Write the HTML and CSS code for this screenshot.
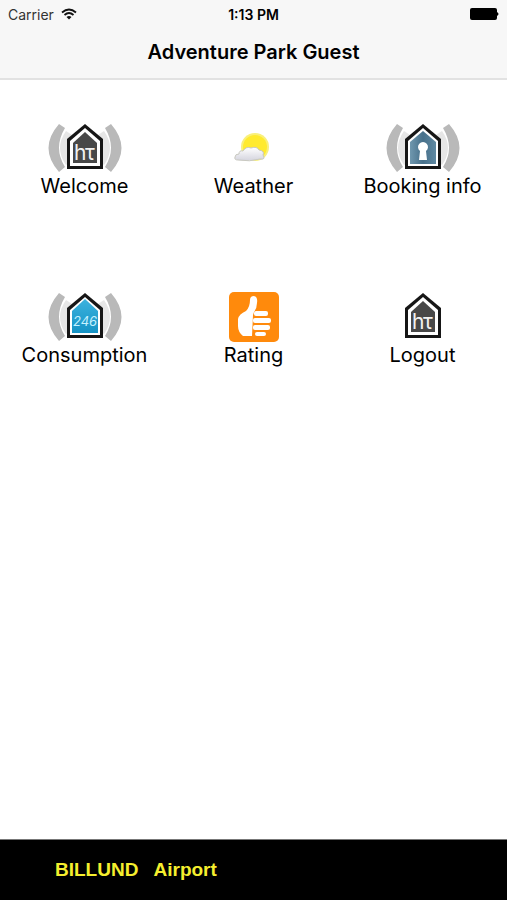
FILE: index.html
```html
<!DOCTYPE html>
<html lang="en">

<head>
    <meta charset="UTF-8" />
    <meta name="viewport" content="width=device-width, initial-scale=1.0" />
    <title>Adventure Park Guest</title>
    <link rel="stylesheet" href="styles.css">
</head>

<body>
    <!-- shared icon parts -->
    <svg class="defs" aria-hidden="true">
        <defs>
            <linearGradient id="water" x1="0" y1="0" x2="0" y2="1">
                <stop offset="0" stop-color="#3cb2de" />
                <stop offset="1" stop-color="#1593c5" />
            </linearGradient>
            <linearGradient id="steel" x1="0" y1="0" x2="1" y2="0">
                <stop offset="0" stop-color="#6f97ae" />
                <stop offset="0.5" stop-color="#47708a" />
                <stop offset="1" stop-color="#5f89a2" />
            </linearGradient>
            <linearGradient id="cloud" x1="0" y1="0" x2="0" y2="1">
                <stop offset="0" stop-color="#ffffff" />
                <stop offset="1" stop-color="#d4d4de" />
            </linearGradient>
            <symbol id="waves" viewBox="0 0 74 50">
                <path d="M18 8Q6 25 18 42L24 38V12zM56 8Q68 25 56 42L50 38V12z" fill="#e6e6e6" />
                <path d="M11 1L17 5Q5 25 17 44L11 49Q-10 25 11 1z" fill="#b9b9b9" />
                <path d="M63 1L57 5Q69 25 57 44L63 49Q84 25 63 1z" fill="#b9b9b9" />
            </symbol>
            <symbol id="house" viewBox="0 0 74 50">
                <path d="M37 1L55 16V46H19V16z" fill="#161616" />
                <path d="M37 5L52 18V43H22V18z" fill="#fff" />
            </symbol>
        </defs>
    </svg>

    <header>
        <div class="status">
            <span class="carrier">Carrier
                <svg width="16" height="12" viewBox="0 0 16 12" aria-hidden="true">
                    <path d="M1 4.500Q8 -1.500 15 4.500M3.500 7Q8 3 12.500 7" fill="none" stroke="#111" stroke-width="1.800" />
                    <path d="M5.500 9Q8 7 10.500 9L8 11.500z" fill="#111" />
                </svg>
            </span>
            <span class="time">1:13 PM</span>
            <span class="battery">
                <svg width="30" height="12" viewBox="0 0 30 12" aria-hidden="true">
                    <rect x="1" width="27" height="12" rx="2" fill="#000" />
                    <path d="M28 4Q31 6 28 8z" fill="#000" />
                </svg>
            </span>
        </div>
        <h1>Adventure Park Guest</h1>
    </header>

    <main class="menu">
        <a class="item" href="#welcome">
            <svg class="icon" viewBox="0 0 74 50" aria-hidden="true">
                <use href="#waves" />
                <use href="#house" />
                <path d="M37 9L49 20V40H25V20z" fill="#484848" />
                <text class="mark" x="26" y="37">h</text>
                <text class="mark" x="37" y="37">τ</text>
            </svg>
            <span>Welcome</span>
        </a>
        <a class="item" href="#weather">
            <svg class="icon" viewBox="0 0 74 50" aria-hidden="true">
                <circle cx="38" cy="24" r="14" fill="#f9f07a" />
                <circle cx="38" cy="24" r="12" fill="#ffea2e" />
                <path d="M21 37Q17 37 18 34Q18 31 22 31Q22 27 26 28Q29 23 34 25Q40 23 42 27Q48 28 46 32Q49 37 43 36Q33 39 21 37z" fill="url(#cloud)" stroke="#c9c9c0" />
            </svg>
            <span>Weather</span>
        </a>
        <a class="item" href="#booking">
            <svg class="icon" viewBox="0 0 74 50" aria-hidden="true">
                <use href="#waves" />
                <use href="#house" />
                <path d="M37 8L50 19V41H24V19z" fill="url(#steel)" />
                <path d="M34 28A5 5 0 1 1 40 28L41 37H33z" fill="#fff" />
            </svg>
            <span>Booking info</span>
        </a>
        <a class="item" href="#consumption">
            <svg class="icon" viewBox="0 0 74 50" aria-hidden="true">
                <use href="#waves" />
                <use href="#house" />
                <path d="M37 7L50 19V41H24V19z" fill="url(#water)" />
                <text class="meter" x="37" y="34">246</text>
            </svg>
            <span>Consumption</span>
        </a>
        <a class="item" href="#rating">
            <svg class="icon" viewBox="0 0 74 50" aria-hidden="true">
                <rect x="12" width="50" height="50" rx="5" fill="#ff8a0c" />
                <path d="M33 8Q33 4 37 4Q41 5 40 11Q40 16 37 20L36 23L35 44H26Q21 40 21 34V27Q22 22 29 19Q33 15 33 8z" fill="#fff" />
                <g fill="#fff">
                    <rect x="37" y="19" width="14" height="5" rx="2" />
                    <rect x="36" y="26" width="18" height="5" rx="2" />
                    <rect x="36" y="33" width="17" height="5" rx="2" />
                    <rect x="38" y="40" width="11" height="4" rx="2" />
                </g>
            </svg>
            <span>Rating</span>
        </a>
        <a class="item" href="#logout">
            <svg class="icon" viewBox="0 0 74 50" aria-hidden="true">
                <use href="#house" />
                <path d="M37 9L49 20V40H25V20z" fill="#484848" />
                <text class="mark" x="26" y="37">h</text>
                <text class="mark" x="37" y="37">τ</text>
            </svg>
            <span>Logout</span>
        </a>
    </main>

    <footer>BILLUND&nbsp;&nbsp; Airport</footer>
</body>

</html>
```

FILE: styles.css
```css
* {
    box-sizing: border-box;
}

body {
    display: flex;
    flex-direction: column;
    min-height: 100vh;
    margin: 0;
    background: #fff;
    color: #000;
    font-family: Inter, "Liberation Sans", sans-serif;
}

.defs {
    position: absolute;
    width: 0;
    height: 0;
}

header {
    background: #f7f7f7;
    border-bottom: 2px solid #e2e2e2;
}

.status {
    display: grid;
    grid-template-columns: 1fr auto 1fr;
    align-items: center;
    height: 28px;
    padding: 0 8px;
    font-size: 14px;
}

.carrier {
    display: flex;
    align-items: center;
    gap: 7px;
    color: #333;
}

.time {
    font-weight: 600;
}

.battery {
    display: flex;
    justify-content: flex-end;
}

h1 {
    margin: 0;
    padding: 12px 0 14px;
    font-size: 20px;
    font-weight: 600;
    line-height: 24px;
    text-align: center;
}

.menu {
    flex: 1;
    display: grid;
    grid-template-columns: repeat(3, 1fr);
    align-content: start;
}

.item {
    display: flex;
    flex-direction: column;
    align-items: center;
    aspect-ratio: 1;
    padding-top: 43px;
    color: #000;
    font-size: 20px;
    line-height: 26px;
    text-decoration: none;
}

.icon {
    width: 74px;
    height: 50px;
}

.mark {
    fill: #f2f2f2;
    font-size: 21px;
}

.meter {
    fill: #c5f1ff;
    font-size: 13px;
    font-style: italic;
    text-anchor: middle;
}

footer {
    padding: 18px 55px;
    border-top: 1px solid #777;
    background: #000;
    color: #f5ee2e;
    font-family: "Liberation Sans", Arial, sans-serif;
    font-size: 19px;
    font-weight: bold;
    line-height: 24px;
}
```
